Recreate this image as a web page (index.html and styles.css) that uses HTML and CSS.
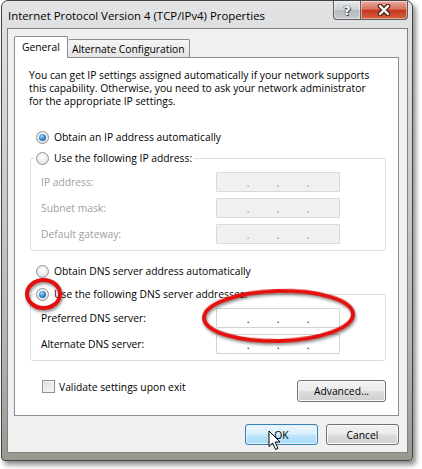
FILE: index.html
```html
<!DOCTYPE html>
<html lang="en">

<head>
  <meta charset="UTF-8">
  <title>Internet Protocol Version 4 (TCP/IPv4) Properties</title>
  <link rel="stylesheet" href="styles.css">
</head>

<body>

  <div class="window">
    <div class="titlebar">
      <div class="title">Internet Protocol Version 4 (TCP/IPv4) Properties</div>
      <div class="caption-buttons">
        <div class="cap-btn help">?</div>
        <div class="cap-btn close">
          <svg width="14" height="12" viewBox="0 0 14 12">
            <path d="M3 2 L11 10 M11 2 L3 10" stroke="#4a2420" stroke-width="4.6" stroke-linecap="round" />
            <path d="M3 2 L11 10 M11 2 L3 10" stroke="#fff" stroke-width="2.4" stroke-linecap="round" />
          </svg>
        </div>
      </div>
    </div>

    <div class="client">
      <div class="tabs">
        <div class="tab active">General</div>
        <div class="tab">Alternate Configuration</div>
      </div>

      <div class="tab-panel">
        <p class="intro">You can get IP settings assigned automatically if your network supports<br>
          this capability. Otherwise, you need to ask your network administrator<br>
          for the appropriate IP settings.</p>

        <label class="option first"><span class="radio checked"></span>Obtain an IP address automatically</label>

        <fieldset class="group">
          <legend><label class="option"><span class="radio"></span>Use the following IP address:</label></legend>
          <div class="field disabled">
            <span>IP address:</span>
            <div class="ip-box"><i>.</i><i>.</i><i>.</i></div>
          </div>
          <div class="field disabled">
            <span>Subnet mask:</span>
            <div class="ip-box"><i>.</i><i>.</i><i>.</i></div>
          </div>
          <div class="field disabled">
            <span>Default gateway:</span>
            <div class="ip-box"><i>.</i><i>.</i><i>.</i></div>
          </div>
        </fieldset>

        <label class="option dns-auto"><span class="radio"></span>Obtain DNS server address automatically</label>

        <fieldset class="group dns">
          <legend><label class="option"><span class="radio checked"></span>Use the following DNS server addresses:</label></legend>
          <div class="field">
            <span>Preferred DNS server:</span>
            <div class="ip-box"><i>.</i><i>.</i><i>.</i></div>
          </div>
          <div class="field">
            <span>Alternate DNS server:</span>
            <div class="ip-box"><i>.</i><i>.</i><i>.</i></div>
          </div>
        </fieldset>

        <div class="panel-footer">
          <label class="check"><span class="checkbox"></span>Validate settings upon exit</label>
          <button class="btn advanced">Advanced...</button>
        </div>
      </div>

      <div class="dialog-buttons">
        <button class="btn default">OK</button>
        <button class="btn">Cancel</button>
      </div>
    </div>
  </div>

  <!-- red marks drawn over the screenshot -->
  <svg class="marks" width="422" height="469" viewBox="0 0 422 469">
    <ellipse cx="43.5" cy="294" rx="16.5" ry="14" />
    <ellipse cx="278.5" cy="316" rx="74.5" ry="25" transform="rotate(-1.5 278.5 316)" />
  </svg>

  <svg class="cursor" width="14" height="21" viewBox="0 0 14 21">
    <path d="M1 1 V16.5 L4.6 13 L7.6 19.5 L10 18.4 L7.1 12 H12 Z" fill="#fff" stroke="#000" stroke-width="1"
      stroke-linejoin="miter" />
  </svg>

</body>

</html>
```

FILE: styles.css
```css
body {
  margin: 0;
  width: 422px;
  height: 469px;
  overflow: hidden;
  position: relative;
  background: #fff;
  font-family: "Open Sans", "Liberation Sans", sans-serif;
  font-size: 10.3px;
  color: #000;
}

.window {
  margin-left: 1px;
  width: 412px;
  height: 461px;
  box-sizing: border-box;
  border: 1px solid #444;
  border-radius: 7px 7px 4px 4px;
  padding: 0 4px 7px 5px;
  background: linear-gradient(to bottom, #e2e3e4 0%, #cfd1d3 30%, #b3b5b4 75%, #98998f 100%);
  box-shadow: 3px 4px 5px rgba(0, 0, 0, 0.45);
  display: flex;
  flex-direction: column;
}

/* title bar */
.titlebar {
  height: 28px;
  display: flex;
  justify-content: space-between;
  align-items: flex-start;
}

.title {
  padding: 7px 0 0 1px;
  line-height: 15px;
  font-size: 11.4px;
}

.caption-buttons {
  display: flex;
}

.cap-btn {
  height: 19px;
  box-sizing: border-box;
  border: 1px solid #5e5e5e;
  border-top: none;
  display: flex;
  align-items: center;
  justify-content: center;
  box-shadow: inset 0 0 0 1px rgba(255, 255, 255, 0.45);
}

.help {
  width: 27px;
  border-radius: 0 0 0 4px;
  border-right: none;
  background: linear-gradient(to bottom, #e6e8ea 0%, #cdd1d5 48%, #b4b9be 52%, #c7cbcf 100%);
  color: #fff;
  font-family: "DejaVu Sans", sans-serif;
  font-weight: bold;
  font-size: 13px;
  text-shadow: 0 0 1px #333, 0 0 1px #333, 1px 1px 0 #555;
}

.close {
  width: 48px;
  border-radius: 0 0 4px 0;
  background: linear-gradient(to bottom, #e9ad9f 0%, #d7705c 45%, #c4381f 52%, #d4613f 100%);
}

/* client area */
.client {
  flex: 1;
  border: 1px solid #7f7f7f;
  background: #f0f0f0;
  padding: 7px 8px 7px 6px;
  display: flex;
  flex-direction: column;
}

.tabs {
  display: flex;
  align-items: flex-end;
  height: 21px;
  position: relative;
  z-index: 1;
}

.tab {
  height: 18px;
  box-sizing: border-box;
  padding: 0 4px;
  border: 1px solid #898c95;
  border-bottom: none;
  border-left: none;
  border-radius: 2px 2px 0 0;
  background: linear-gradient(to bottom, #f5f5f5, #e4e4e4);
  line-height: 18px;
}

.tab.active {
  height: 22px;
  margin-bottom: -1px;
  padding: 0 7px;
  border-left: 1px solid #898c95;
  background: #fff;
  line-height: 20px;
}

.tab-panel {
  border: 1px solid #898c95;
  background: #fff;
  padding: 11px 12px 13px 15px;
}

.intro {
  margin: 0 0 0 -1px;
  line-height: 13px;
  white-space: nowrap;
}

/* radios and checkbox */
.option {
  display: flex;
  align-items: center;
  gap: 5px;
  height: 15px;
  line-height: 15px;
  white-space: nowrap;
}

.option.first {
  margin: 22px 0 0 6px;
}

.option.dns-auto {
  margin: 13px 0 0 6px;
}

.radio {
  width: 13px;
  height: 13px;
  box-sizing: border-box;
  border-radius: 50%;
  border: 1px solid #8f9190;
  background: radial-gradient(circle at 50% 40%, #ffffff 0%, #ececec 55%, #d4d4d4 100%);
  display: flex;
  align-items: center;
  justify-content: center;
}

.radio.checked::after {
  content: "";
  width: 7px;
  height: 7px;
  border-radius: 50%;
  background: radial-gradient(circle at 40% 35%, #a6dcf9 0%, #3a8ad2 45%, #124f8c 100%);
}

.check {
  display: flex;
  align-items: center;
  gap: 4px;
  height: 13px;
  margin-left: 12px;
}

.checkbox {
  width: 13px;
  height: 13px;
  box-sizing: border-box;
  border: 1px solid #8f8f8f;
  background: linear-gradient(135deg, #dedede, #f8f8f8);
  box-shadow: inset 0 0 0 1px #f4f4f4;
}

/* group boxes */
.group {
  margin: 6px 0 0 0;
  padding: 6px 11px 6px 4px;
  border: 1px solid #d5dfe5;
  border-radius: 3px;
  min-inline-size: 0;
  display: flex;
  flex-direction: column;
  gap: 6px;
}

.group.dns {
  margin-top: 8px;
}

.group legend {
  padding: 0 2px 0 1px;
}

.field {
  display: grid;
  grid-template-columns: 175px 124px;
  align-items: center;
  padding-left: 6px;
}

.field.disabled span {
  color: #a0a0a0;
}

.ip-box {
  height: 20px;
  box-sizing: border-box;
  border: 1px solid #cfd2d5;
  border-radius: 1px;
  background: #fff;
  display: flex;
  justify-content: center;
  gap: 27px;
  line-height: 20px;
}

.field.disabled .ip-box {
  background: #f0f0f0;
  border-color: #d9d9d9;
  color: #808080;
}

.ip-box i {
  font-style: normal;
  width: 3px;
  text-align: center;
}

/* footer rows */
.panel-footer {
  margin-top: 19px;
  display: flex;
  justify-content: space-between;
  align-items: flex-start;
}

.btn {
  height: 21px;
  box-sizing: border-box;
  border: 1px solid #707070;
  border-radius: 3px;
  padding: 0;
  font: inherit;
  color: #000;
  background: linear-gradient(to bottom, #f2f2f2 0%, #ebebeb 48%, #dddddd 52%, #cfcfcf 100%);
  box-shadow: inset 0 0 0 1px #fbfbfb;
}

.btn.advanced {
  width: 89px;
  height: 22px;
}

.dialog-buttons {
  margin-top: 8px;
  display: flex;
  justify-content: flex-end;
  gap: 8px;
}

.dialog-buttons .btn {
  width: 73px;
}

.btn.default {
  border-color: #3c7fb1;
  background: linear-gradient(to bottom, #eaf6fd 0%, #d9f0fc 48%, #bee6fd 52%, #a7d9f5 100%);
  box-shadow: inset 0 0 0 1px #e4f3fb;
}

/* overlays */
.marks {
  position: absolute;
  top: 0;
  left: 0;
  pointer-events: none;
}

.marks ellipse {
  fill: none;
  stroke: #e3100e;
  stroke-width: 4;
  filter: drop-shadow(1px 2px 1.5px rgba(0, 0, 0, 0.45));
}

.cursor {
  position: absolute;
  left: 268px;
  top: 430px;
  pointer-events: none;
}
```
